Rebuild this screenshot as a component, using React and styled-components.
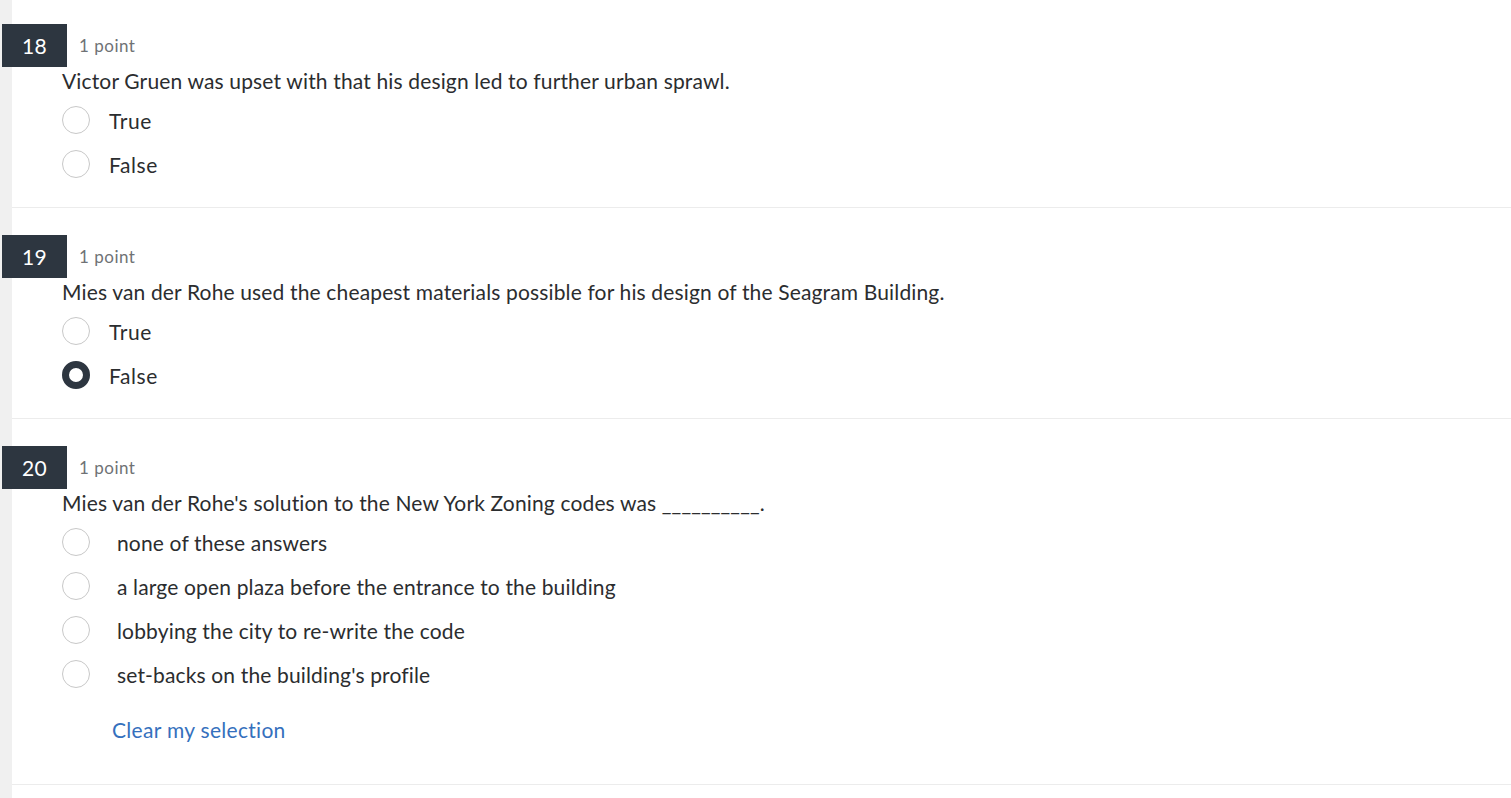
import styled, { createGlobalStyle } from "styled-components";

const GlobalStyle = createGlobalStyle`
  body {
    margin: 0;
    background: #fff;
    font-family: Lato, "Open Sans", sans-serif;
    color: #2b2d2f;
  }
`;

const questions = [
  {
    number: 18,
    text: "Victor Gruen was upset with that his design led to further urban sprawl.",
    options: ["True", "False"],
    selected: -1,
    boolean: true,
  },
  {
    number: 19,
    text: "Mies van der Rohe used the cheapest materials possible for his design of the Seagram Building.",
    options: ["True", "False"],
    selected: 1,
    boolean: true,
  },
  {
    number: 20,
    text: "Mies van der Rohe's solution to the New York Zoning codes was __________.",
    options: [
      "none of these answers",
      "a large open plaza before the entrance to the building",
      "lobbying the city to re-write the code",
      "set-backs on the building's profile",
    ],
    selected: -1,
    clearable: true,
  },
];

export default function App() {
  return (
    <>
      <GlobalStyle />
      <Page>
        {questions.map((q, i) => (
          <Section key={q.number} first={i === 0}>
            <Header>
              <Badge>{q.number}</Badge>
              <Points>1 point</Points>
            </Header>
            <Prompt>{q.text}</Prompt>
            <Options>
              {q.options.map((o, j) => (
                <Option key={o} boolean={q.boolean}>
                  <Radio checked={j === q.selected} />
                  <Label boolean={q.boolean}>{o}</Label>
                </Option>
              ))}
            </Options>
            {q.clearable && <ClearLink>Clear my selection</ClearLink>}
          </Section>
        ))}
      </Page>
    </>
  );
}

const Page = styled.div`
  min-height: 798px;
  padding-left: 12px;
  background: linear-gradient(to right, #f0f0f0 12px, #fff 12px);
  overflow: hidden;
`;

const Section = styled.section`
  display: flex;
  flex-direction: column;
  padding: ${(p) => (p.first ? "24px" : "27px")} 0 21px 50px;
  border-bottom: 1px solid #ececec;
`;

const Header = styled.div`
  display: flex;
  align-items: center;
  gap: 12px;
  margin-left: -60px;
  height: 43px;
`;

const Badge = styled.div`
  width: 65px;
  height: 43px;
  background: #2d3640;
  color: #fff;
  font-size: 21px;
  letter-spacing: 0.3px;
  display: flex;
  align-items: center;
  justify-content: center;
`;

const Points = styled.span`
  font-size: 17px;
  letter-spacing: 0.5px;
  color: #6f7275;
`;

const Prompt = styled.div`
  font-size: 21px;
  line-height: 28px;
  letter-spacing: 0.15px;
`;

const Options = styled.div`
  display: flex;
  flex-direction: column;
  margin-top: 3px;
`;

const Option = styled.label`
  display: flex;
  align-items: center;
  gap: ${(p) => (p.boolean ? 19 : 27)}px;
  height: 44px;
`;

const Radio = styled.span`
  box-sizing: border-box;
  width: 28px;
  height: 28px;
  border-radius: 50%;
  border: ${(p) => (p.checked ? "7px solid #2d3640" : "1px solid #c8c8c8")};
  background: #fff;
  flex-shrink: 0;
`;

const Label = styled.span`
  font-size: 21px;
  letter-spacing: ${(p) => (p.boolean ? 0.6 : 0.15)}px;
`;

const ClearLink = styled.a`
  font-size: 21px;
  line-height: 24px;
  letter-spacing: 0.3px;
  color: #3570bd;
  margin: 22px 0 21px 50px;
  cursor: pointer;
`;
